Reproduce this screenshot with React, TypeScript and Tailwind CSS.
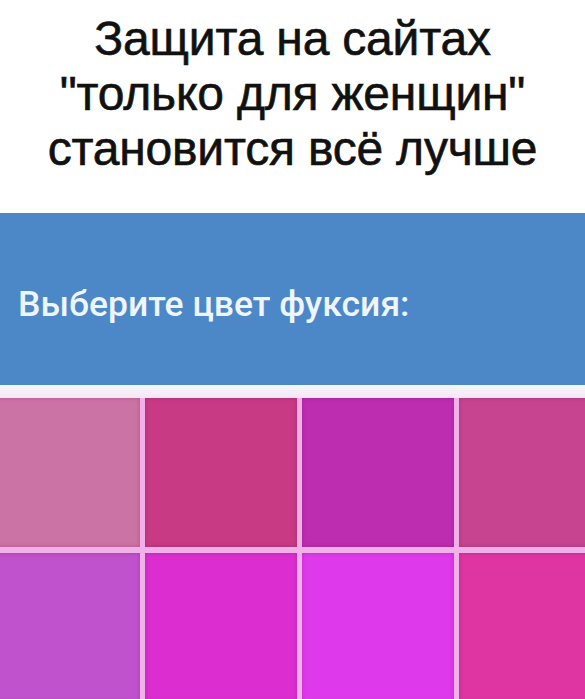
const swatches = [
  '#cc73a5',
  '#c83a84',
  '#bc2db0',
  '#c64490',
  '#c052cd',
  '#dc2ed0',
  '#de3aec',
  '#de35a3',
];

export default function App() {
  return (
    <div className="flex h-[699px] w-[585px] flex-col overflow-hidden bg-white">
      <div className="flex h-[213px] shrink-0 flex-col items-center pt-[11px] text-center font-['Liberation_Sans',Arial,sans-serif] text-[48px] leading-[55px] tracking-[-0.2px] text-[#111] [-webkit-text-stroke:0.6px_#111]">
        <p>Защита на сайтах</p>
        <p>"только для женщин"</p>
        <p>становится всё лучше</p>
      </div>

      <div className="flex h-[172px] shrink-0 items-center bg-[#4c87c8] px-[18px] pt-[12px]">
        <span className="font-['Roboto',sans-serif] text-[35.5px] font-medium text-[#eef6fb]">
          Выберите цвет фуксия:
        </span>
      </div>

      <div className="h-[13px] shrink-0 bg-gradient-to-b from-[#f4f7fb] to-[#f6e6f4]" />

      <div className="flex-1 bg-[#f1b0ea]">
        <div className="ml-[-12px] grid grid-cols-[repeat(4,152px)] grid-rows-[149px_149px] gap-x-[5px] gap-y-[6px]">
          {swatches.map((color) => (
            <div
              key={color}
              className="shadow-[inset_0_0_4px_rgba(80,0,60,0.25)]"
              style={{ backgroundColor: color }}
            />
          ))}
        </div>
      </div>
    </div>
  );
}
